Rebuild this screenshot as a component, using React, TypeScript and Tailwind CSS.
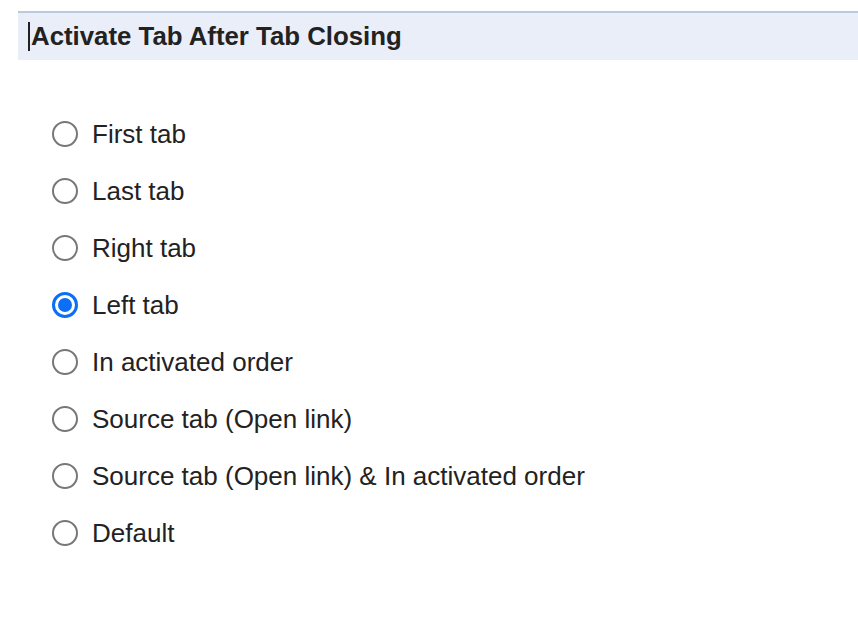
const options = [
  'First tab',
  'Last tab',
  'Right tab',
  'Left tab',
  'In activated order',
  'Source tab (Open link)',
  'Source tab (Open link) & In activated order',
  'Default',
];

export default function App() {
  const selected = 'Left tab';

  return (
    <div className="min-h-[622px] bg-white pt-[11px] pl-[18px] font-['Liberation_Sans',Arial,sans-serif] text-[#222]">
      {/* section header */}
      <div className="flex h-[49px] items-center border-t-2 border-[#b9c9de] bg-[#eaeef9] pl-[10px]">
        <span className="h-[29px] w-[2px] bg-[#222]" />
        <span className="pl-[1px] text-[25.8px] font-bold leading-[27px] text-[#222]">
          Activate Tab After Tab Closing
        </span>
      </div>
      <div className="flex flex-col pt-[45px] pl-[34px]">
        {options.map((opt) => {
          const checked = opt === selected;
          return (
            <label key={opt} className="flex h-[57px] items-center gap-[14px]">
              {checked ? (
                <span className="flex h-[26px] w-[26px] items-center justify-center rounded-full border-[3px] border-[#0b6ff5]">
                  <span className="h-[14px] w-[14px] rounded-full bg-[#0b6ff5]" />
                </span>
              ) : (
                <span className="h-[26px] w-[26px] rounded-full border-2 border-[#777]" />
              )}
              <span className="text-[26px] leading-[30px]">{opt}</span>
            </label>
          );
        })}
      </div>
    </div>
  );
}
